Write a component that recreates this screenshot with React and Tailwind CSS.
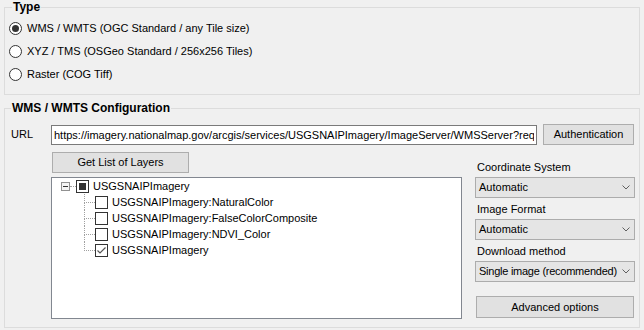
import React from "react";

const font = { fontFamily: '"Liberation Sans", Arial, sans-serif' };

function Radio({ checked, label }) {
  return (
    <div className="flex items-center h-[23px]">
      <span className="w-[13px] h-[13px] rounded-full border border-[#333333] bg-white flex items-center justify-center">
        {checked && <span className="w-[7px] h-[7px] rounded-full bg-[#333333]" />}
      </span>
      <span className="ml-[5px] text-[11px] leading-[13px] text-black">{label}</span>
    </div>
  );
}

function Button({ children, className }) {
  return (
    <div
      className={
        "flex items-center justify-center bg-[#e1e1e1] border border-[#adadad] text-[11px] leading-[13px] text-black " +
        className
      }
    >
      {children}
    </div>
  );
}

function Select({ value, tight }) {
  return (
    <div className="flex items-center justify-between h-[21px] w-[160px] bg-[#e5e5e5] border border-[#acacac] pl-[3px] pr-[4px] text-[11px] leading-[13px] text-black">
      <span className={"whitespace-nowrap " + (tight ? "tracking-[-0.25px]" : "")}>{value}</span>
      <svg width="8" height="5" viewBox="0 0 8 5" className="shrink-0 ml-[2px]">
        <path d="M0.5 0.5 L4 4 L7.5 0.5" fill="none" stroke="#606060" strokeWidth="1" />
      </svg>
    </div>
  );
}

function Label({ children }) {
  return <div className="ml-[2px] mt-[5px] mb-[3px] h-[13px] text-[11px] leading-[13px] text-black">{children}</div>;
}

function ChildRow({ label, checked, last }) {
  return (
    <div className="flex items-start h-[16px] pl-[32px]">
      <div className="w-[11px] h-[16px] flex flex-col">
        <span className="h-[9px] border-l border-b border-dotted border-[#a0a0a0]" />
        {!last && <span className="h-[7px] border-l border-dotted border-[#a0a0a0]" />}
      </div>
      <span className="mt-[2px] w-[13px] h-[13px] border border-[#333333] bg-white flex items-center justify-center">
        {checked && (
          <svg width="11" height="11" viewBox="0 0 11 11">
            <path d="M1.5 5.5 L4 8 L9.5 2.5" fill="none" stroke="#555555" strokeWidth="1.2" />
          </svg>
        )}
      </span>
      <span className="ml-[4px] text-[11px] leading-[16px] text-black whitespace-nowrap">{label}</span>
    </div>
  );
}

export default function App() {
  return (
    <div className="w-full h-[330px] bg-[#f0f0f0] overflow-hidden" style={font}>
      <fieldset className="mx-[4px] border border-[#dcdcdc] pl-[4px] pt-[2px] pb-[8px]">
        <legend className="ml-[3px] px-[1px] text-[12px] leading-[15px] font-bold text-black">Type</legend>
        <Radio checked label="WMS / WMTS (OGC Standard / any Tile size)" />
        <Radio label="XYZ / TMS (OSGeo Standard / 256x256 Tiles)" />
        <Radio label="Raster (COG Tiff)" />
      </fieldset>

      <fieldset className="mx-[4px] mt-[6px] border border-[#dcdcdc] pl-[6px] pb-[8px]">
        <legend className="px-[1px] text-[12px] leading-[15px] font-bold text-black">WMS / WMTS Configuration</legend>

        <div className="flex items-end mt-[8px] h-[21px]">
          <span className="w-[40px] self-center text-[11px] leading-[13px] text-black">URL</span>
          <input
            readOnly
            value="https://imagery.nationalmap.gov/arcgis/services/USGSNAIPImagery/ImageServer/WMSServer?request=GetCapabilities&service=WMS"
            className="w-[486px] h-[20px] border border-[#7a7a7a] bg-white px-[2px] text-[11px] text-black outline-none"
            style={font}
          />
          <Button className="ml-[6px] w-[91px] h-[21px]">Authentication</Button>
        </div>

        <div className="flex ml-[40px]">
          <div className="flex flex-col">
            <Button className="ml-[1px] mt-[7px] w-[137px] h-[21px]">Get List of Layers</Button>
            <div className="mt-[4px] w-[411px] h-[142px] border border-[#828790] bg-white">
              <div className="flex items-center h-[16px] pl-[9px]">
                <span className="w-[9px] h-[9px] border border-[#919191] bg-[#f4f4f4] flex items-center justify-center">
                  <span className="w-[5px] h-px bg-[#333333]" />
                </span>
                <span className="w-[6px] border-t border-dotted border-[#a0a0a0]" />
                <span className="w-[13px] h-[13px] border border-[#333333] bg-white flex items-center justify-center">
                  <span className="w-[7px] h-[7px] bg-[#333333]" />
                </span>
                <span className="ml-[4px] text-[11px] leading-[16px] text-black">USGSNAIPImagery</span>
              </div>
              <ChildRow label="USGSNAIPImagery:NaturalColor" />
              <ChildRow label="USGSNAIPImagery:FalseColorComposite" />
              <ChildRow label="USGSNAIPImagery:NDVI_Color" />
              <ChildRow label="USGSNAIPImagery" checked last />
            </div>
          </div>

          <div className="ml-[13px] w-[160px] flex flex-col pt-[11px]">
            <Label>Coordinate System</Label>
            <Select value="Automatic" />
            <Label>Image Format</Label>
            <Select value="Automatic" />
            <Label>Download method</Label>
            <Select value="Single image (recommended)" tight />
            <Button className="ml-[1px] mt-[14px] w-[158px] h-[22px]">Advanced options</Button>
          </div>
        </div>
      </fieldset>
    </div>
  );
}
